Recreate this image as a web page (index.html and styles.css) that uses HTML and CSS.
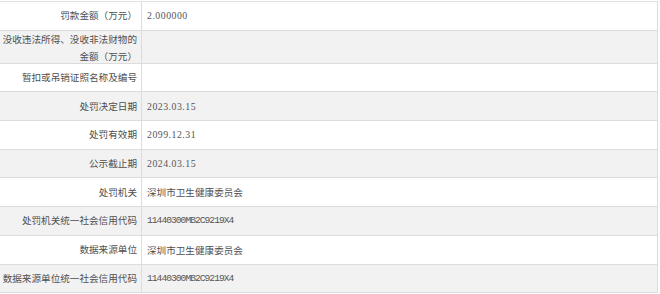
FILE: index.html
```html
<!DOCTYPE html>
<html lang="zh">
<head>
<meta charset="utf-8">
<link rel="stylesheet" href="styles.css">
</head>
<body>
<div class="table">
  <div class="row"><div class="label">罚款金额（万元）</div><div class="value"><span class="num">2.000000</span></div></div>
  <div class="row alt tall"><div class="label">没收违法所得、没收非法财物的<br>金额（万元）</div><div class="value"></div></div>
  <div class="row"><div class="label">暂扣或吊销证照名称及编号</div><div class="value"></div></div>
  <div class="row alt"><div class="label">处罚决定日期</div><div class="value"><span class="num">2023.03.15</span></div></div>
  <div class="row"><div class="label">处罚有效期</div><div class="value"><span class="num">2099.12.31</span></div></div>
  <div class="row alt"><div class="label">公示截止期</div><div class="value"><span class="num">2024.03.15</span></div></div>
  <div class="row"><div class="label">处罚机关</div><div class="value">深圳市卫生健康委员会</div></div>
  <div class="row alt"><div class="label">处罚机关统一社会信用代码</div><div class="value"><span class="mono">11440300MB2C9219X4</span></div></div>
  <div class="row"><div class="label">数据来源单位</div><div class="value">深圳市卫生健康委员会</div></div>
  <div class="row alt"><div class="label">数据来源单位统一社会信用代码</div><div class="value"><span class="mono">11440300MB2C9219X4</span></div></div>
</div>
</body>
</html>
```

FILE: styles.css
```css
html, body {
  margin: 0;
  padding: 0;
  background: #ffffff;
}
body {
  padding-top: 1px;
  font-family: "Noto Sans CJK SC", "Noto Sans", sans-serif;
  font-size: 9.6px;
  color: #4f4f4f;
}
.table {
  width: 657px;
  border-top: 1px solid #e2e2e2;
  border-right: 1px solid #dcdcdc;
}
.row {
  display: grid;
  grid-template-columns: 142px 1fr;
  height: 27.7px;
  border-bottom: 1px solid #dcdcdc;
  background: #ffffff;
}
.row.alt {
  background: #f2f2f2;
}
.row.tall {
  height: 32px;
}
.label {
  border-right: 1px solid #dcdcdc;
  text-align: right;
  padding-right: 4px;
  display: flex;
  align-items: center;
  justify-content: flex-end;
  line-height: 17px;
  white-space: nowrap;
}
.value {
  display: flex;
  align-items: center;
  padding-left: 5px;
}
.num {
  font-family: "Liberation Serif", serif;
  font-size: 9.8px;
  letter-spacing: 0.5px;
  color: #555;
}
.mono {
  font-family: "Liberation Mono", monospace;
  font-size: 9.6px;
  letter-spacing: -0.96px;
  color: #555;
}
```
